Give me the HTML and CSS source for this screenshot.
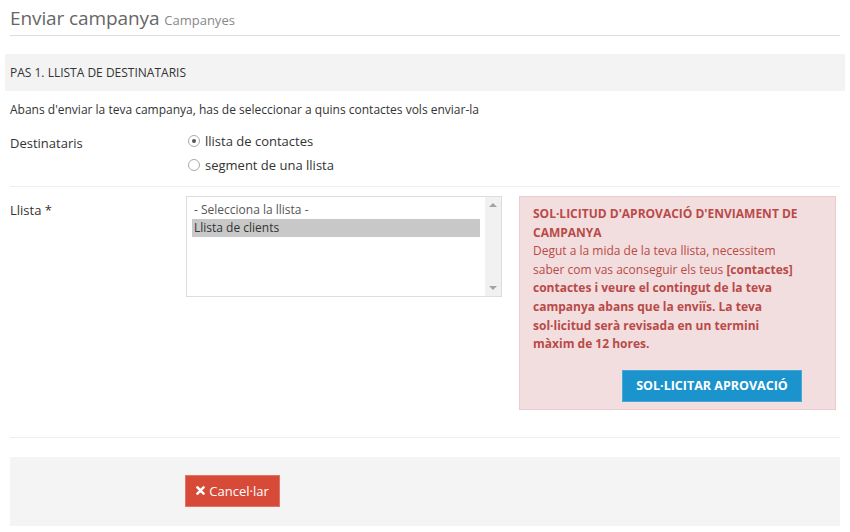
FILE: index.html
```html
<!DOCTYPE html>
<html lang="ca">
<head>
<meta charset="utf-8">
<title>Enviar campanya</title>
<link rel="stylesheet" href="styles.css">
</head>
<body>
<div class="page">
  <h1 class="page-title">Enviar campanya <small>Campanyes</small></h1>

  <div class="step-head">PAS 1. LLISTA DE DESTINATARIS</div>

  <p class="intro">Abans d'enviar la teva campanya, has de seleccionar a quins contactes vols enviar-la</p>

  <div class="form-row">
    <div class="label">Destinataris</div>
    <div class="control radios">
      <label class="radio"><span class="dot checked"></span>llista de contactes</label>
      <label class="radio"><span class="dot"></span>segment de una llista</label>
    </div>
  </div>

  <div class="form-row list-row">
    <div class="label">Llista *</div>
    <div class="control list-control">
      <div class="listbox">
        <div class="options">
          <div class="opt placeholder">- Selecciona la llista -</div>
          <div class="opt selected">Llista de clients</div>
        </div>
        <div class="scrollbar">
          <span class="arrow up"></span>
          <span class="arrow down"></span>
        </div>
      </div>
      <div class="alert">
        <div class="alert-title">SOL·LICITUD D'APROVACIÓ D'ENVIAMENT DE CAMPANYA</div>
        <p class="alert-body">Degut a la mida de la teva llista, necessitem saber com vas aconseguir els teus <b>[contactes] contactes i veure el contingut de la teva campanya abans que la enviïs. La teva sol·licitud serà revisada en un termini màxim de 12 hores.</b></p>
        <div class="alert-actions">
          <button class="btn btn-blue">SOL·LICITAR APROVACIÓ</button>
        </div>
      </div>
    </div>
  </div>

  <div class="footer">
    <button class="btn btn-red"><svg class="x-icon" viewBox="0 0 10 10" width="9" height="9"><path d="M1.6 1.6 L8.4 8.4 M8.4 1.6 L1.6 8.4" stroke="#fff" stroke-width="2.8" stroke-linecap="round"/></svg>Cancel·lar</button>
  </div>
</div>
</body>
</html>
```

FILE: styles.css
```css
* { box-sizing: border-box; }
html, body { margin: 0; padding: 0; background: #fff; }
body {
  font-family: "Open Sans", "Noto Sans", sans-serif;
  font-size: 12px;
  color: #333;
  font-feature-settings: "locl" 0;
}
.page { padding: 0 5px 0 5px; }

.page-title {
  margin: 0 5px;
  padding: 6px 0 3px 0;
  font-size: 19px;
  font-weight: 400;
  color: #666;
  border-bottom: 1px solid #ddd;
  line-height: 24px;
  letter-spacing: -0.1px;
}
.page-title small {
  font-size: 13px;
  color: #888;
  letter-spacing: 0;
}

.step-head {
  margin-top: 18px;
  background: #f3f3f3;
  height: 37px;
  line-height: 37px;
  padding-left: 5px;
  font-size: 12px;
  color: #333;
}

.intro {
  margin: 10px 5px 0 5px;
  line-height: 17px;
  font-size: 12px;
  color: #333;
}

.form-row {
  display: flex;
  margin: 0 5px;
  border-bottom: 1px solid #eee;
}
.form-row .label {
  width: 176px;
  font-size: 13px;
  color: #333;
  padding-top: 16px;
}
.radios { padding: 11px 0 9px 0; }

.radio {
  display: flex;
  align-items: center;
  font-size: 13px;
  color: #333;
  height: 24px;
  padding-left: 2px;
}
.dot {
  width: 12px;
  height: 12px;
  border-radius: 50%;
  border: 1px solid #aaa;
  background: #fff;
  margin-right: 5px;
  position: relative;
}
.dot.checked::after {
  content: "";
  position: absolute;
  left: 3px;
  top: 3px;
  width: 4px;
  height: 4px;
  border-radius: 50%;
  background: #555;
}

.list-row { padding: 9px 0 27px 0; }
.list-row .label { padding-top: 5px; }
.list-control { display: flex; gap: 17px; align-items: flex-start; }

.listbox {
  width: 316px;
  height: 101px;
  border: 1px solid #ddd;
  display: flex;
  background: #fff;
}
.options { flex: 1; padding: 4px 5px 0 5px; }
.opt {
  font-size: 12px;
  line-height: 18px;
  padding-left: 2px;
  color: #333;
}
.opt.placeholder { color: #555; }
.opt.selected { background: #c8c8c8; }
.scrollbar {
  width: 16px;
  background: #f1f1f1;
  position: relative;
}
.arrow {
  position: absolute;
  left: 4px;
  width: 0; height: 0;
  border-left: 4px solid transparent;
  border-right: 4px solid transparent;
}
.arrow.up { top: 6px; border-bottom: 4px solid #a3a3a3; }
.arrow.down { bottom: 6px; border-top: 4px solid #a3a3a3; }

.alert {
  width: 317px;
  background: #f2dede;
  border: 1px solid #ebccd1;
  color: #b94a48;
  padding: 8px 33px 7px 13px;
  font-size: 12px;
  line-height: 18.6px;
}
.alert-title { font-weight: 700; }
.alert-body { margin: 0; padding-right: 2px; }
.alert-body b { font-weight: 700; }
.alert-actions {
  display: flex;
  justify-content: flex-end;
  margin-top: 16px;
}

.btn {
  font-family: "Open Sans", "Noto Sans", sans-serif;
  font-size: 12px;
  border: 1px solid transparent;
  color: #fff;
  height: 32px;
  cursor: pointer;
  border-radius: 0;
  display: inline-flex;
  align-items: center;
  justify-content: center;
  font-feature-settings: "locl" 0;
}
.btn-blue {
  background: #1b93cc;
  border-color: #46a8d8;
  font-weight: 700;
  width: 180px;
  font-size: 12.5px;
}
.btn-red {
  background: #d84a38;
  border-color: #e27465;
  width: 95px;
  font-size: 13px;
}
.x-icon { margin-right: 4px; }

.footer {
  margin: 19px 5px 0 5px;
  background: #f4f4f4;
  height: 69px;
  padding: 18px 0 0 175px;
}
```
